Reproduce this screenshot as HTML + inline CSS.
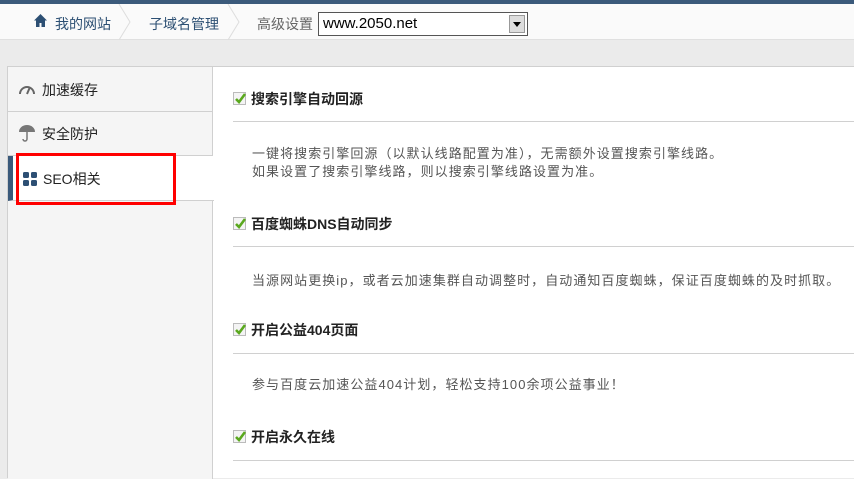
<!DOCTYPE html>
<html><head><meta charset="utf-8"><style>
*{margin:0;padding:0;box-sizing:border-box}
body{width:854px;height:478px;overflow:hidden;background:#ebebeb;font-family:"Liberation Sans","Noto Sans CJK SC",sans-serif;font-size:13px;position:relative}
.top{position:absolute;left:0;top:0;width:854px;height:4px;background:#3b5a7b}
.hdr{position:absolute;left:0;top:4px;width:854px;height:36px;background:#fafafa;border-bottom:1px solid #e0e0e0}
.bc{position:absolute;top:10px;color:#2c4f73;font-size:14px}
.sep{position:absolute;top:0;width:14px;height:36px}
.sel{position:absolute;left:318px;top:8px;width:210px;height:24px;border:1px solid #555;background:#fff;font-size:15px;padding:2px 4px;color:#000}
.arr{position:absolute;right:2px;top:2px;width:16px;height:18px;background:#ddd;border:1px solid #999}
.panel{position:absolute;left:7px;top:66px;width:847px;height:412px;background:#fff;border-left:1px solid #d0d0d0;border-top:1px solid #d0d0d0}
.side{position:absolute;left:0;top:0;width:205px;height:412px;background:#f5f5f5;border-right:1px solid #d0d0d0}
.it{position:absolute;left:0;width:205px;height:45px;border-bottom:1px solid #d0d0d0;color:#222;padding:13px 0 0 34px;font-size:14px}
.act{background:#fff;width:206px;border-left:5px solid #3b5a7b;padding-left:30px}
.red{position:absolute;left:16px;top:153px;width:160px;height:52px;border:3px solid #f00}
.sec{position:absolute;left:233px;width:621px}
.t{font-weight:bold;color:#222;padding-left:18px;position:relative;height:20px;line-height:20px;font-size:14px}
.cb{position:absolute;left:0;top:3px;width:13px;height:13px;border:1px solid #bbb;background:#f4f4f4}
.ln{position:absolute;left:0;width:621px;height:1px;background:#d0d0d0}
.d{position:absolute;left:19px;color:#555;line-height:18px;letter-spacing:1.05px}
</style></head><body>
<div class="top"></div>
<div class="hdr">
<svg style="position:absolute;left:33px;top:9px" width="15" height="15" viewBox="0 0 15 15"><path d="M7.5 1L1 7.5h2V14h3.5V10h2v4H12V7.5h2z" fill="#2c4f73"/></svg>
<span class="bc" style="left:55px">我的网站</span>
<svg class="sep" style="left:118px" viewBox="0 0 14 36"><path d="M1 0L12 18L1 36" fill="none" stroke="#ddd"/></svg>
<span class="bc" style="left:149px">子域名管理</span>
<svg class="sep" style="left:227px" viewBox="0 0 14 36"><path d="M1 0L12 18L1 36" fill="none" stroke="#ddd"/></svg>
<span class="bc" style="left:257px;color:#666">高级设置</span>
<div class="sel">www.2050.net<div class="arr"><svg width="14" height="16" viewBox="0 0 14 16"><path d="M3 6h8l-4 5z" fill="#000"/></svg></div></div>
</div>
<div class="panel">
<div class="side">
<div class="it" style="top:0"><svg style="position:absolute;left:10px;top:16px" width="18" height="12" viewBox="0 0 18 12"><path d="M2 11A7 7 0 0 1 16 11" fill="none" stroke="#666" stroke-width="2"/><path d="M9 11L12 4" stroke="#666" stroke-width="2"/></svg>加速缓存</div>
<div class="it" style="top:44px"><svg style="position:absolute;left:10px;top:13px" width="18" height="18" viewBox="0 0 18 18"><path d="M1 8A8 7 0 0 1 17 8z" fill="#777"/><path d="M9 8v7a2 2 0 0 1-4 0" fill="none" stroke="#777" stroke-width="1.5"/></svg>安全防护</div>
<div class="it act" style="top:89px;height:45px;font-size:14px"><svg style="position:absolute;left:10px;top:16px" width="14" height="14" viewBox="0 0 14 14"><g fill="#2c4f73"><rect x="0" y="0" width="6" height="6" rx="1.5"/><rect x="8" y="0" width="6" height="6" rx="1.5"/><rect x="0" y="8" width="6" height="6" rx="1.5"/><rect x="8" y="8" width="6" height="6" rx="1.5"/></g></svg>SEO相关</div>
</div>
</div>
<div class="red"></div>
<svg width="0" height="0" style="position:absolute"><defs><path id="ck" d="M2 7l3 3l6-8" fill="none" stroke="#5aa81e" stroke-width="2.6"/></defs></svg>
<div class="sec" style="top:89px"><div class="t"><span class="cb"><svg width="13" height="13" style="position:absolute;left:0;top:-1px"><use href="#ck"/></svg></span>搜索引擎自动回源</div></div>
<div class="ln" style="left:233px;top:121px;width:621px;position:absolute"></div>
<div class="d" style="left:252px;top:145px">一键将搜索引擎回源（以默认线路配置为准），无需额外设置搜索引擎线路。<br>如果设置了搜索引擎线路，则以搜索引擎线路设置为准。</div>
<div class="sec" style="top:214px"><div class="t"><span class="cb"><svg width="13" height="13" style="position:absolute;left:0;top:-1px"><use href="#ck"/></svg></span>百度蜘蛛DNS自动同步</div></div>
<div class="ln" style="left:233px;top:246px;width:621px;position:absolute"></div>
<div class="d" style="left:252px;top:272px">当源网站更换ip，或者云加速集群自动调整时，自动通知百度蜘蛛，保证百度蜘蛛的及时抓取。</div>
<div class="sec" style="top:320px"><div class="t"><span class="cb"><svg width="13" height="13" style="position:absolute;left:0;top:-1px"><use href="#ck"/></svg></span>开启公益404页面</div></div>
<div class="ln" style="left:233px;top:353px;width:621px;position:absolute"></div>
<div class="d" style="left:252px;top:376px">参与百度云加速公益404计划，轻松支持100余项公益事业！</div>
<div class="sec" style="top:427px"><div class="t"><span class="cb"><svg width="13" height="13" style="position:absolute;left:0;top:-1px"><use href="#ck"/></svg></span>开启永久在线</div></div>
<div class="ln" style="left:233px;top:460px;width:621px;position:absolute"></div>
</body></html>
